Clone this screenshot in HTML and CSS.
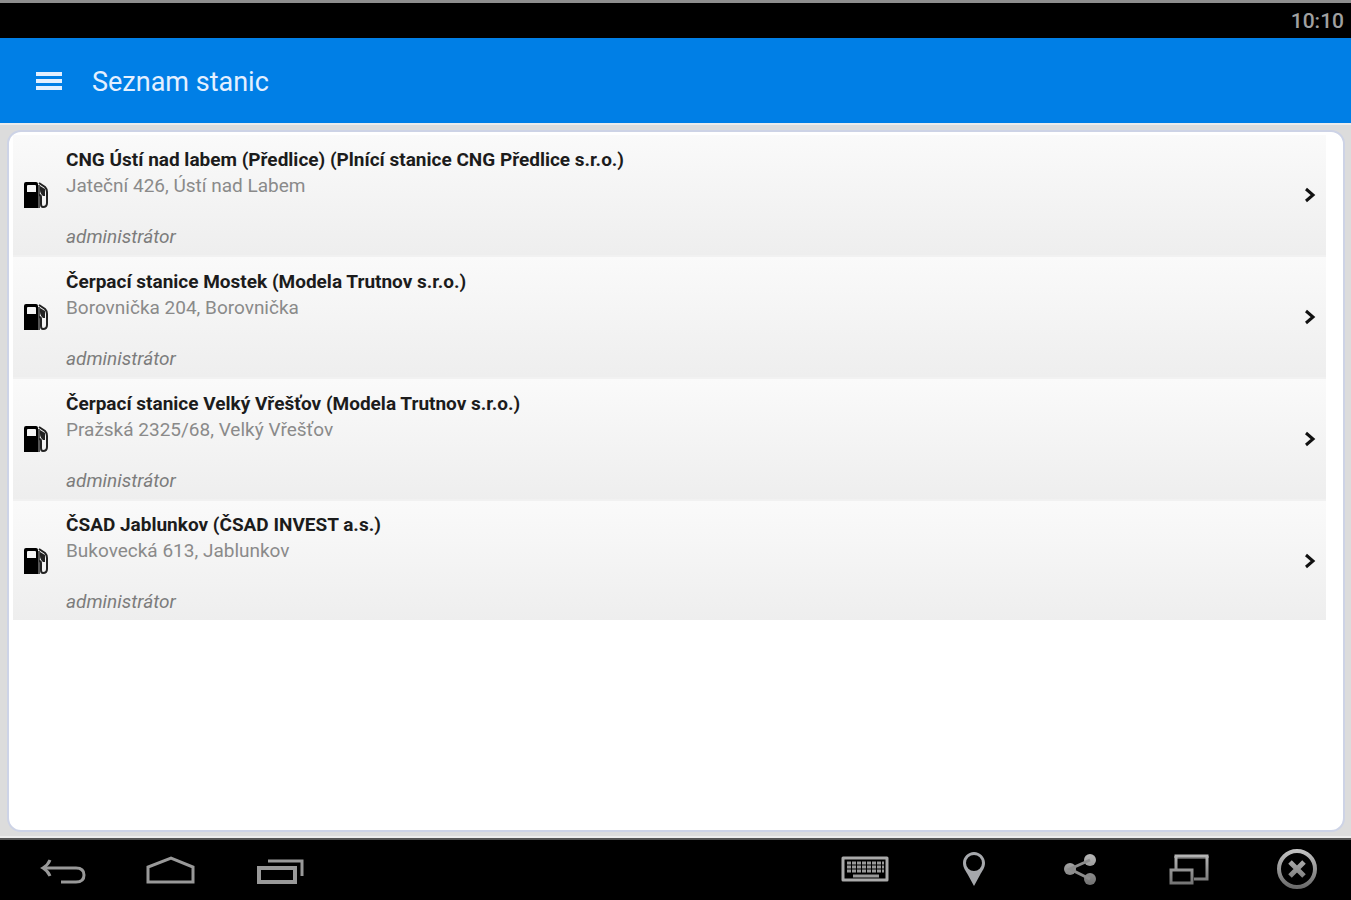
FILE: index.html
```html
<!DOCTYPE html>
<html lang="cs">
<head>
<meta charset="utf-8">
<title>Seznam stanic</title>
<link rel="stylesheet" href="styles.css">
</head>
<body>
<svg class="defs" aria-hidden="true">
  <defs>
    <linearGradient id="metal" gradientUnits="userSpaceOnUse" x1="0" y1="4" x2="0" y2="44">
      <stop offset="0" stop-color="#c4c4c4"/><stop offset="1" stop-color="#686868"/>
    </linearGradient>
  </defs>
  <symbol id="pump" viewBox="0 0 26 28">
    <path fill-rule="evenodd" d="M3 1h10q2 0 2 2v24H1V3q0-2 2-2zM5 4q-1 0-1 1v6h9V5q0-1-1-1z"/>
    <path fill="#555" d="M15 4h2v23h-2z"/>
    <path fill="none" stroke="#222" stroke-width="2" d="M16 2l6 4q2 2 2 5v11q0 4-4 4-2 0-2-3v-7q0-2-2-2"/>
    <path fill="#222" d="M17 5l5 3v7h-2q-4-3-3-10z"/>
  </symbol>
  <symbol id="chevron" viewBox="0 0 12 16">
    <path fill="none" stroke="#111" stroke-width="3" d="M2 2l7 6-7 6"/>
  </symbol>
</svg>
<div class="screen">
  <div class="status"><time>10:10</time></div>
  <header class="appbar">
    <button class="menu" aria-label="Menu">
      <svg width="26" height="20" viewBox="0 0 26 20"><path fill="#e4f0ff" d="M0 0h26v4H0zM0 7h26v4H0zM0 14h26v4H0z"/></svg>
    </button>
    <h1 class="heading">Seznam stanic</h1>
  </header>
  <main class="content">
    <ul class="stations">
      <li><a class="station" href="#s1">
        <svg class="pump"><use href="#pump"/></svg>
        <span class="info"><strong class="name">CNG Ústí nad labem (Předlice) (Plnící stanice CNG Předlice s.r.o.)</strong><span class="address">Jateční 426, Ústí nad Labem</span><em class="role">administrátor</em></span>
        <svg class="chevron"><use href="#chevron"/></svg></a></li>
      <li><a class="station" href="#s2">
        <svg class="pump"><use href="#pump"/></svg>
        <span class="info"><strong class="name">Čerpací stanice Mostek (Modela Trutnov s.r.o.)</strong><span class="address">Borovnička 204, Borovnička</span><em class="role">administrátor</em></span>
        <svg class="chevron"><use href="#chevron"/></svg></a></li>
      <li><a class="station" href="#s3">
        <svg class="pump"><use href="#pump"/></svg>
        <span class="info"><strong class="name">Čerpací stanice Velký Vřešťov (Modela Trutnov s.r.o.)</strong><span class="address">Pražská 2325/68, Velký Vřešťov</span><em class="role">administrátor</em></span>
        <svg class="chevron"><use href="#chevron"/></svg></a></li>
      <li><a class="station" href="#s4">
        <svg class="pump"><use href="#pump"/></svg>
        <span class="info"><strong class="name">ČSAD Jablunkov (ČSAD INVEST a.s.)</strong><span class="address">Bukovecká 613, Jablunkov</span><em class="role">administrátor</em></span>
        <svg class="chevron"><use href="#chevron"/></svg></a></li>
    </ul>
  </main>
  <nav class="navbar">
    <div class="group left">
      <button aria-label="Zpět"><svg viewBox="0 0 52 48"><g fill="none" stroke="#999" stroke-width="3"><path d="M14 15q-2 5-7 8 5 3 7 8"/><path d="M7 23h33q8 0 8 7t-8 7H25"/></g></svg></button>
      <button aria-label="Domů"><svg viewBox="0 0 52 48"><path fill="none" stroke="#999" stroke-width="3" d="M3 37V22L26 13l22 9v15z"/></svg></button>
      <button aria-label="Poslední aplikace"><svg viewBox="0 0 52 48"><g fill="none" stroke="#999"><path stroke-width="4" d="M5 23h36v14H5z"/><path stroke-width="3" d="M14 16h34v15"/></g></svg></button>
    </div>
    <div class="group right">
      <button aria-label="Klávesnice"><svg viewBox="0 0 52 48"><path fill="none" stroke="#aaa" stroke-width="3" stroke-linejoin="round" d="M4 13h44v22H4z"/><path fill="none" stroke="#999" stroke-width="3" stroke-dasharray="4 1" d="M8 18h37M8 22h37M8 26h37"/><path stroke="#999" stroke-width="3" d="M14 31h26"/></svg></button>
      <button aria-label="Poloha"><svg viewBox="0 0 52 48"><path fill="#a6a8ac" fill-rule="evenodd" d="M27 7c6 0 11 5 11 11 0 5-3 8-5 12l-6 11-6-11c-2-4-5-7-5-12 0-6 5-11 11-11zm0 3a8 8 0 1 0 0 16 8 8 0 0 0 0-16z"/></svg></button>
      <button aria-label="Sdílet"><svg viewBox="0 0 52 48"><g fill="url(#metal)"><circle cx="15" cy="24" r="6"/><circle cx="35" cy="15" r="6"/><circle cx="35" cy="34" r="6"/></g><path fill="none" stroke="#8c8c8c" stroke-width="3" d="M35 15L15 24l20 10"/></svg></button>
      <button aria-label="Okna"><svg viewBox="0 0 52 48"><g fill="none" stroke="url(#metal)" stroke-width="3"><path d="M13 24V11h31v23H31"/><path d="M12 11h33v2H12z" stroke-width="1"/><path d="M8 25h21v13H8z"/></g></svg></button>
      <button aria-label="Zavřít"><svg viewBox="0 0 52 48"><g fill="none" stroke="url(#metal)"><circle cx="26" cy="24" r="18" stroke-width="4"/><path stroke-width="5" d="M19 17l14 14M33 17L19 31"/></g></svg></button>
    </div>
  </nav>
</div>
</body>
</html>
```
FILE: styles.css
```css
* { box-sizing: border-box; }

body {
  margin: 0;
  font-family: Roboto, "Noto Sans", sans-serif;
  background: #dcdcdc;
}

.defs { position: absolute; width: 0; height: 0; }

button { padding: 0; border: 0; background: none; cursor: pointer; }
button svg { display: block; }

.screen { display: flex; flex-direction: column; min-height: 100vh; }

.status {
  display: flex;
  justify-content: flex-end;
  align-items: center;
  height: 38px;
  padding: 0 7px;
  border-top: 3px solid #8e8e8e;
  background: #000;
  color: #a0a0a0;
  font-size: 21px;
  font-weight: 500;
}

.appbar {
  display: flex;
  align-items: center;
  gap: 30px;
  height: 85px;
  padding: 2px 36px 0;
  background: #007fe6;
}

.heading { margin: 0; color: #e4f0ff; font-size: 27px; font-weight: 400; }

.content {
  flex: 1;
  display: flex;
  padding: 5px 6px 4px 7px;
  border-top: 2px solid #ececec;
  border-bottom: 2px solid #ececec;
}

.stations {
  flex: 1;
  margin: 0;
  padding: 3px 17px 4px 4px;
  list-style: none;
  background: #fff;
  border: 2px solid #cdd3e6;
  border-radius: 14px;
}

.station {
  display: flex;
  align-items: center;
  height: 122px;
  padding: 0 10px;
  border-bottom: 2px solid #f1f1f1;
  background: linear-gradient(#fafafa, #eeeeee);
  text-decoration: none;
}
li:last-child .station { height: 119px; border-bottom: 0; }

.pump { width: 26px; height: 28px; }
.chevron { width: 12px; height: 16px; }

.info {
  flex: 1;
  display: flex;
  flex-direction: column;
  padding: 6px 0 0 17px;
  font-size: 19px;
  line-height: 26px;
}

.name { color: #1c1c1c; font-weight: 700; }
.address { color: #8a8a8a; }
.role { margin-top: 25px; color: #7c7c7c; }

.navbar {
  display: flex;
  justify-content: space-between;
  height: 62px;
  padding: 5px 28px 0 36px;
  border-top: 2px solid #555;
  background: #000;
}

.group { display: flex; align-items: flex-start; }
.group svg { width: 52px; height: 48px; }
.left { gap: 57px; }
.right { gap: 56px; }
```
